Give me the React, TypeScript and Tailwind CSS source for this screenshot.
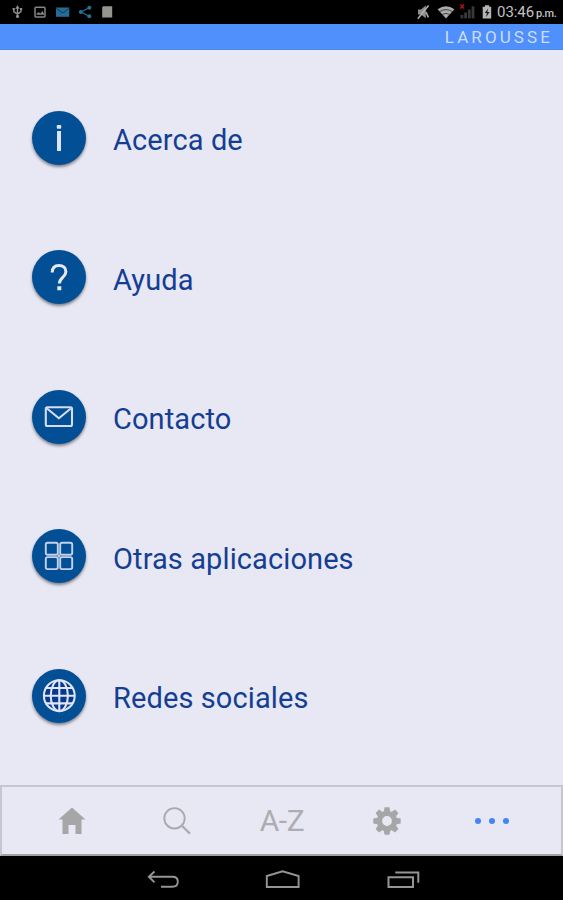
import type { ReactNode } from "react";

const TOOTH_ANGLES = [0, 45, 90, 135];

const MENU: { label: string; icon: ReactNode }[] = [
  {
    label: "Acerca de",
    icon: (
      <g fill="#dfe5f3">
        <rect x="24.8" y="14" width="4.4" height="3.8" rx="0.8" />
        <rect x="25" y="20" width="4" height="20" />
      </g>
    ),
  },
  {
    label: "Ayuda",
    icon: (
      <g fill="none" stroke="#e8e9f5" strokeWidth="3">
        <path d="M20.2 22.6c0-4.6 2.6-7 6.8-7s6.9 2.3 6.9 6.1c0 5.4-6.5 6-6.5 11.8" />
        <path d="M27.3 36.2v4" strokeWidth="4" />
      </g>
    ),
  },
  {
    label: "Contacto",
    icon: (
      <g fill="none" stroke="#d5dcf0" strokeWidth="2.1" strokeLinejoin="round">
        <rect x="13.8" y="17.3" width="26.2" height="18.7" rx="1.5" />
        <path d="M15 18.5 26.9 28.3 38.8 18.5" />
      </g>
    ),
  },
  {
    label: "Otras aplicaciones",
    icon: (
      <g fill="none" stroke="#c6d2eb" strokeWidth="1.9">
        <rect x="13.8" y="13.7" width="12" height="12" rx="1.8" />
        <rect x="28.2" y="13.7" width="12" height="12" rx="1.8" />
        <rect x="13.8" y="28.1" width="12" height="12" rx="1.8" />
        <rect x="28.2" y="28.1" width="12" height="12" rx="1.8" />
        <path d="M25 24.9l4 4M29 24.9l-4 4" strokeWidth="1.2" />
      </g>
    ),
  },
  {
    label: "Redes sociales",
    icon: (
      <g fill="none" stroke="#e0e5f4" strokeWidth="2.1">
        <circle cx="27.3" cy="26.7" r="15.4" fill="#07398f" />
        <ellipse cx="27.3" cy="26.7" rx="8.6" ry="15.4" />
        <path d="M27.3 11.2v31M11.8 26.7h31M13.6 19h27.4M13.6 34.4h27.4" />
      </g>
    ),
  },
];

function StatusBar() {
  return (
    <header className="flex h-6 shrink-0 items-center justify-between bg-black pr-[5px] pl-[11px]">
      <svg width="104" height="24" viewBox="11 0 104 24" fill="none">
        <g stroke="#8e8e8e" strokeWidth="1.4">
          <path d="M17.5 8v8M13.8 9.5v2.2l3.7 2.4 3.5-2.4V9.5" />
          <path d="M15.6 8.6 17.5 5.5l1.9 3.1z" fill="#8e8e8e" strokeWidth="0.5" />
          <circle cx="17.5" cy="16.4" r="1.6" fill="#8e8e8e" stroke="none" />
          <path d="M12.6 9h2.2M20 9h2.2" strokeWidth="1.8" />
        </g>
        <rect x="35" y="7.2" width="10" height="9.8" rx="1" stroke="#858585" strokeWidth="1.5" />
        <path d="M36 14.8l2.3-2.8 2 1.5 2.2-2.5 2 3.8z" fill="#858585" />
        <rect x="56" y="7.5" width="13.3" height="9.3" fill="#276b94" />
        <path d="M56.3 8.4l6.4 4.6 6.4-4.6" stroke="#0c3a58" strokeWidth="1" />
        <g fill="#2a7091">
          <path d="M89.3 7.8 80.8 12l8.5 4.2" stroke="#2a7091" strokeWidth="1.2" fill="none" />
          <circle cx="89.3" cy="7.8" r="2" />
          <circle cx="80.8" cy="12" r="2" />
          <circle cx="89.3" cy="16.3" r="2" />
        </g>
        <path d="M103.3 6.2h8.9v11.4h-10V7.3z" fill="#949490" />
      </svg>
      <div className="flex items-center font-['Roboto',sans-serif] text-[#c2c2c2]">
        <svg width="80" height="24" viewBox="415 0 80 24" fill="none">
          <path d="M418 9.5h3l4.8-4v12.8L421 14.5h-3z" fill="#8f8f8f" />
          <path d="M428.6 5.5 417.8 18.8M426 12l2.4 5.4" stroke="#b0b0b0" strokeWidth="1.5" />
          <path d="M437.6 9.2q8.4-6 16.8 0L446 18.6z" fill="#aaa" />
          <path d="M439.6 11.6q6.4-4 12.8 0M442.3 14.5q3.7-2.3 7.4 0" stroke="#2a2a2a" strokeWidth="0.8" />
          <g fill="#383838">
            <rect x="460.5" y="15" width="2.8" height="3.4" />
            <rect x="464.2" y="12.5" width="2.8" height="5.9" />
            <rect x="467.9" y="9.5" width="2.8" height="8.9" />
            <rect x="471.6" y="6.3" width="2.8" height="12.1" />
          </g>
          <path d="M460.2 4.5l4 4M464.2 4.5l-4 4" stroke="#b51616" strokeWidth="1.3" />
          <path d="M485 5.2h4.2v1.6h2v11.8h-8.5V6.8h2.3z" fill="#b5b5b5" />
          <path d="M488.2 8.5 484.8 13h2.1l-.8 4.2 3.4-5.2h-2.2z" fill="#171717" />
        </svg>
        <span className="w-[39px] pl-[2px] text-[15px] leading-6 tracking-[-0.05px]">03:46</span>
        <span className="w-[24px] pt-[3px] pl-[2px] text-[11px] leading-5 font-medium tracking-[-0.35px]">p.m.</span>
      </div>
    </header>
  );
}

function TabBar() {
  return (
    <nav className="grid h-[71px] shrink-0 grid-cols-5 items-center border-2 border-[#c6c6d1] border-b-[#a0a0a8] bg-[#e7e8f3] px-[17px]">
      <div className="flex justify-center">
        <svg width="28" height="28" viewBox="0 0 28 28" fill="#a6a6a9">
          <path d="M14 .4 27.5 12.5h-4v14.4h-6V18h-7v8.9h-6V12.5h-4z" />
        </svg>
      </div>
      <div className="flex justify-center">
        <svg width="30" height="28" viewBox="0 0 30 28" fill="none" stroke="#a9a9ae">
          <circle cx="12.5" cy="11.3" r="10.2" strokeWidth="1.9" />
          <path d="M19.7 18.5l8.3 8.3" strokeWidth="2.3" />
        </svg>
      </div>
      <div className="pl-px text-center font-['Roboto',sans-serif] text-[30px] leading-[34px] tracking-[-0.4px] text-[#adadb1]">
        A-Z
      </div>
      <div className="flex justify-center">
        <svg width="28" height="28" viewBox="-14 -14 28 28">
          <circle r="7.6" fill="none" stroke="#a6a6a9" strokeWidth="5.4" />
          {TOOTH_ANGLES.map((angle) => (
            <g key={angle} transform={`rotate(${angle})`} fill="#a6a6a9">
              <path d="M-3.3-9.5-2.4-13.7h4.8L3.3-9.5zM-3.3 9.5-2.4 13.7h4.8L3.3 9.5z" />
            </g>
          ))}
        </svg>
      </div>
      <div className="flex justify-center gap-2">
        <span className="size-[6px] rounded-full bg-[#4285f4]" />
        <span className="size-[6px] rounded-full bg-[#4285f4]" />
        <span className="size-[6px] rounded-full bg-[#4285f4]" />
      </div>
    </nav>
  );
}

function SystemNav() {
  return (
    <footer className="flex h-11 shrink-0 items-center justify-center bg-black">
      <svg width="277" height="44" viewBox="143 856 277 44" fill="none" stroke="#959595" strokeWidth="1.9">
        <path d="M154.5 871.5l-5.7 5.3 5.7 5.6M149 876.8h23.5q5.3 0 5.3 5t-5.3 5h-11.5" />
        <path d="M266.8 887v-11l15.8-4.7 16 4.7v11z" />
        <path d="M388.5 877.3h24.5v9.7h-24.5zM395.3 872.4h23v10.4" strokeWidth="2" />
      </svg>
    </footer>
  );
}

export default function App() {
  return (
    <div className="flex h-[900px] w-[563px] flex-col overflow-hidden bg-[#e7e8f3]">
      <StatusBar />
      <div className="flex h-[26px] shrink-0 items-center justify-end border-b border-[#4b89ec] bg-[#5090fc] pt-[2px] pr-[10px] font-['Roboto',sans-serif] text-[17px] tracking-[3.1px] text-[#cbdcfa]">
        LAROUSSE
      </div>

      <main className="flex min-h-0 flex-1 flex-col pt-[18px]">
        {MENU.map((item) => (
          <button key={item.label} className="flex h-[139.5px] shrink-0 items-center gap-[27px] pl-8 text-left">
            <svg width="54" height="54" viewBox="0 0 54 54" className="rounded-full bg-[#034f96] shadow-[0_2px_3px_rgba(60,60,70,0.6)]">
              {item.icon}
            </svg>
            <span className="pt-[5px] font-['Roboto',sans-serif] text-[29px] leading-9 tracking-[0.1px] text-[#143e94]">
              {item.label}
            </span>
          </button>
        ))}
      </main>

      <TabBar />
      <SystemNav />
    </div>
  );
}
